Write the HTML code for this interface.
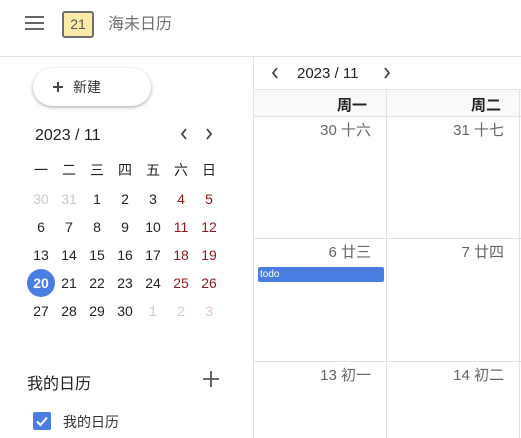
<!DOCTYPE html><html><head><meta charset="utf-8"><style>
*{margin:0;padding:0;box-sizing:border-box}
body{width:521px;height:438px;overflow:hidden;background:#fff;font-family:"Liberation Sans","Noto Sans CJK SC",sans-serif;position:relative;color:#222}
.a{position:absolute}
.c{position:absolute;width:28px;text-align:center;font-size:14px;line-height:16px}
.g{color:#c8c8c8}.r{color:#8b1a1a}.rg{color:#e2c6c6}
.d{position:absolute;font-size:15px;color:#666;text-align:right;width:120px;line-height:18px}
svg{position:absolute}
</style></head><body>
<div class="a" style="left:25px;top:16px;width:19px;height:2px;background:#666"></div>
<div class="a" style="left:25px;top:22px;width:19px;height:2px;background:#666"></div>
<div class="a" style="left:25px;top:28px;width:19px;height:2px;background:#666"></div>
<div class="a" style="left:62px;top:11px;width:32px;height:27px;border:2px solid #6e6e6e;border-radius:3px;background:#fde9a8;font-size:14px;color:#555;text-align:center;line-height:23px">21</div>
<div class="a" style="left:108px;top:14px;font-size:16px;line-height:22px;color:#707070">海未日历</div>
<div class="a" style="left:0;top:56px;width:521px;height:1px;background:#e2e2e2"></div>
<div class="a" style="left:253px;top:56px;width:1px;height:382px;background:#e2e2e2"></div>
<div class="a" style="left:33px;top:68px;width:118px;height:38px;border-radius:19px;background:#fff;box-shadow:0 1px 3px rgba(0,0,0,.25),0 2px 4px rgba(0,0,0,.1);font-size:14px;line-height:38px;padding-left:40px;color:#333">新建</div>
<svg style="left:52px;top:81px" width="12" height="12"><path d="M6 1v10M1 6h10" stroke="#444" stroke-width="2"/></svg>
<div class="a" style="left:35px;top:127px;font-size:16px">2023 / 11</div>
<svg style="left:180px;top:128px" width="8" height="12"><path d="M6 1L2 6l4 5" stroke="#444" stroke-width="1.8" fill="none"/></svg>
<svg style="left:205px;top:128px" width="8" height="12"><path d="M2 1l4 5-4 5" stroke="#444" stroke-width="1.8" fill="none"/></svg>
<div class="a" style="left:27px;top:269px;width:28px;height:28px;border-radius:50%;background:#4a7de2"></div>
<div id="mc"></div>
<div class="a" style="left:27px;top:370px;font-size:16px">我的日历</div>
<svg style="left:203px;top:371px" width="16" height="16"><path d="M8 0v16M0 8h16" stroke="#555" stroke-width="1.8"/></svg>
<div class="a" style="left:33px;top:412px;width:18px;height:18px;border-radius:2px;background:#4a7de2"></div>
<svg style="left:33px;top:412px" width="18" height="18"><path d="M4 9.5l3.5 3.5 6.5-7.5" stroke="#fff" stroke-width="2" fill="none"/></svg>
<div class="a" style="left:63px;top:412px;font-size:14px;color:#333">我的日历</div>
<svg style="left:271px;top:67px" width="8" height="12"><path d="M6 1L2 6l4 5" stroke="#444" stroke-width="1.8" fill="none"/></svg>
<div class="a" style="left:297px;top:65px;font-size:15px">2023 / 11</div>
<svg style="left:383px;top:67px" width="8" height="12"><path d="M2 1l4 5-4 5" stroke="#444" stroke-width="1.8" fill="none"/></svg>
<div class="a" style="left:254px;top:89px;width:267px;height:28px;background:#f9f9f9;border-top:1px solid #e6e6e6;border-bottom:1px solid #e2e2e2"></div>
<div class="a" style="left:386px;top:89px;width:1px;height:349px;background:#e2e2e2"></div>
<div class="a" style="left:519px;top:89px;width:1px;height:349px;background:#e2e2e2"></div>
<div class="a" style="left:254px;top:238px;width:267px;height:1px;background:#e2e2e2"></div>
<div class="a" style="left:254px;top:361px;width:267px;height:1px;background:#e2e2e2"></div>
<div class="a" style="left:337px;top:94px;font-size:15px;font-weight:bold">周一</div>
<div class="a" style="left:471px;top:94px;font-size:15px;font-weight:bold">周二</div>
<div class="d" style="left:251px;top:122px">30 十六</div>
<div class="d" style="left:384px;top:122px">31 十七</div>
<div class="d" style="left:251px;top:244px">6 廿三</div>
<div class="d" style="left:384px;top:244px">7 廿四</div>
<div class="d" style="left:251px;top:367px">13 初一</div>
<div class="d" style="left:384px;top:367px">14 初二</div>
<div class="a" style="left:258px;top:267px;width:126px;height:15px;background:#4a7de2;border-radius:2px;color:#fff;font-size:10px;line-height:15px;padding-left:2px">todo</div>
<script>
var h=["一","二","三","四","五","六","日"];
var rows=[[["30","g"],["31","g"],"1","2","3",["4","r"],["5","r"]],["6","7","8","9","10",["11","r"],["12","r"]],["13","14","15","16","17",["18","r"],["19","r"]],[["20","w"],"21","22","23","24",["25","r"],["26","r"]],["27","28","29","30",["1","g"],["2","rg"],["3","rg"]]];
var s="";
for(var i=0;i<7;i++)s+='<div class="c" style="left:'+(27+i*28)+'px;top:162px">'+h[i]+'</div>';
rows.forEach(function(r,j){r.forEach(function(x,i){var t=x,c="";if(typeof x!="string"){t=x[0];c=x[1];}
s+='<div class="c '+c+'" style="left:'+(27+i*28)+'px;top:'+(191+j*28)+'px;'+(c=="w"?"color:#fff;font-weight:bold":"")+'">'+t+'</div>';});});
document.getElementById("mc").innerHTML=s;
</script>
</body></html>
